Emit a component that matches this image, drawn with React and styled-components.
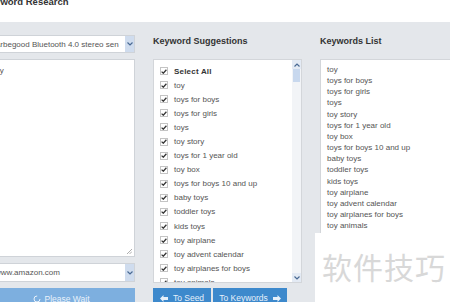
import React from "react";
import styled, { createGlobalStyle } from "styled-components";

const Global = createGlobalStyle`
  html, body { margin: 0; padding: 0; background: #e4e7eb; }
  body { font-family: "Liberation Sans", Arial, sans-serif; overflow: hidden; }
  * { box-sizing: border-box; }
`;

const Frame = styled.div`
  width: 462px;
  height: 302px;
  margin-left: -12px;
  overflow: hidden;
  position: relative;
  background: #e4e7eb;
  display: flex;
  flex-direction: column;
`;

const Header = styled.header`
  height: 22px;
  flex: none;
  background: #ffffff;
  overflow: hidden;
`;

const Title = styled.h1`
  margin: -4px 0 0 -5px;
  font-size: 9.5px;
  line-height: 12px;
  font-weight: bold;
  color: #333;
`;

const Body = styled.div`
  display: flex;
  gap: 18px;
  flex: 1;
  min-height: 0;
`;

const Column = styled.div`
  display: flex;
  flex-direction: column;
  width: ${(p) => (p.$w ? `${p.$w}px` : "auto")};
  flex: ${(p) => (p.$w ? "none" : "1")};
  padding-top: 13px;
`;

const SelectBox = styled.div`
  height: ${(p) => p.$h}px;
  margin-top: ${(p) => p.$mt || 0}px;
  background: #fff;
  border: 1px solid #cfd3d8;
  display: flex;
  align-items: center;
  font-size: 8px;
  color: #555;
  flex: none;
`;

const SelectText = styled.span`
  flex: 1;
  padding-left: 6px;
  white-space: nowrap;
  overflow: hidden;
`;

const SelectArrow = styled.span`
  width: 9px;
  align-self: stretch;
  background: #cfdcee;
  display: flex;
  align-items: center;
  justify-content: center;
`;

const TextArea = styled.div`
  position: relative;
  height: 198px;
  margin-top: 6px;
  background: #fff;
  border: 1px solid #cfd3d8;
  padding: 5px 4px;
  font-size: 8px;
  line-height: 11px;
  color: #555;
  flex: none;
`;

const Grip = styled.svg`
  position: absolute;
  right: 2px;
  bottom: 2px;
`;

const WideButton = styled.div`
  margin-top: 6px;
  height: 22px;
  background: #7dafdf;
  color: #e9f2fb;
  font-size: 8.5px;
  display: flex;
  align-items: center;
  justify-content: center;
  gap: 3px;
  flex: none;
`;

const Heading = styled.h2`
  margin: 0;
  height: 12px;
  font-size: 9px;
  line-height: 12px;
  font-weight: bold;
  color: #333;
  flex: none;
`;

const ListBox = styled.div`
  margin-top: 12px;
  height: 224px;
  background: #fff;
  border: 1px solid #d3d6da;
  display: flex;
  overflow: hidden;
  flex: none;
`;

const CheckList = styled.ul`
  list-style: none;
  margin: 0;
  padding: 4px 0 0 6px;
  flex: 1;
  overflow: hidden;
`;

const CheckRow = styled.li`
  height: 14.1px;
  display: flex;
  align-items: center;
  gap: 6px;
  font-size: 8px;
  color: #555;
  font-weight: ${(p) => (p.$bold ? "bold" : "normal")};
  white-space: nowrap;
  ${(p) => p.$bold && "color: #333; letter-spacing: 0.2px;"}
`;

const Box = styled.span`
  width: 8px;
  height: 8px;
  border: 1px solid #c4c4c4;
  background: #fff;
  display: flex;
  align-items: center;
  justify-content: center;
  flex: none;
`;

const ScrollBar = styled.div`
  width: 9px;
  background: #f2f4f7;
  display: flex;
  flex-direction: column;
  flex: none;
`;

const ScrollArrow = styled.div`
  height: 9px;
  background: #e3eaf4;
  display: flex;
  align-items: center;
  justify-content: center;
  flex: none;
`;

const Thumb = styled.div`
  height: 13px;
  background: #c8d8ee;
  margin: 0 1px;
  flex: none;
`;

const Track = styled.div`
  flex: 1;
`;

const ButtonRow = styled.div`
  display: flex;
  gap: 2px;
  margin-top: 5px;
  flex: none;
`;

const BlueButton = styled.div`
  width: ${(p) => p.$w}px;
  height: 20px;
  background: #3d89cc;
  color: #e6f0fa;
  font-size: 8.5px;
  display: flex;
  align-items: center;
  justify-content: center;
  gap: 5px;
  white-space: nowrap;
`;

const KeywordBox = styled.div`
  margin-top: 12px;
  flex: 1;
  background: #fff;
  border: 1px solid #d3d6da;
  border-right: none;
  padding: 4px 6px;
  font-size: 8px;
  line-height: 11.15px;
  color: #555;
`;

const KeywordLine = styled.div`
  white-space: nowrap;
`;

const Watermark = styled.div`
  position: absolute;
  left: 327px;
  top: 233px;
  right: 0;
  bottom: 0;
  background: #fff;
  display: flex;
  align-items: center;
  padding-left: 7px;
  padding-bottom: 3px;
  font-family: "Noto Sans CJK SC", sans-serif;
  font-size: 30px;
  color: #d8d8d8;
  letter-spacing: 1px;
`;

const Chevron = ({ up }) => (
  <svg width="6" height="4" viewBox="0 0 6 4">
    <path
      d={up ? "M0.5 3.5 L3 1 L5.5 3.5" : "M0.5 0.5 L3 3 L5.5 0.5"}
      fill="none"
      stroke="#4a6a94"
      strokeWidth="1.2"
    />
  </svg>
);

const Check = () => (
  <svg width="6" height="5" viewBox="0 0 6 5">
    <path d="M0.6 2.6 L2.3 4.2 L5.4 0.8" fill="none" stroke="#333" strokeWidth="1.3" />
  </svg>
);

const ArrowIcon = ({ left }) => (
  <svg width="8" height="7" viewBox="0 0 8 7">
    <path
      d={left ? "M0 3.5 L3.5 0 L3.5 2 L8 2 L8 5 L3.5 5 L3.5 7 Z" : "M8 3.5 L4.5 0 L4.5 2 L0 2 L0 5 L4.5 5 L4.5 7 Z"}
      fill="#e6f0fa"
    />
  </svg>
);

const keywords = [
  "toy",
  "toys for boys",
  "toys for girls",
  "toys",
  "toy story",
  "toys for 1 year old",
  "toy box",
  "toys for boys 10 and up",
  "baby toys",
  "toddler toys",
  "kids toys",
  "toy airplane",
  "toy advent calendar",
  "toy airplanes for boys",
  "toy animals",
];

export default function App() {
  return (
    <>
      <Global />
      <Frame>
        <Header>
          <Title>Keyword Research</Title>
        </Header>
        <Body>
          <Column $w={147}>
            <SelectBox $h={18}>
              <SelectText>Arbegood Bluetooth 4.0 stereo sen</SelectText>
              <SelectArrow>
                <Chevron />
              </SelectArrow>
            </SelectBox>
            <TextArea>
              toy
              <Grip width="6" height="6" viewBox="0 0 6 6">
                <path d="M1 6 L6 1 M3.5 6 L6 3.5" stroke="#999" strokeWidth="0.8" />
              </Grip>
            </TextArea>
            <SelectBox $h={19} $mt={6}>
              <SelectText>www.amazon.com</SelectText>
              <SelectArrow>
                <Chevron />
              </SelectArrow>
            </SelectBox>
            <WideButton>
              <svg width="8" height="8" viewBox="0 0 8 8">
                <circle cx="4" cy="4" r="3" fill="none" stroke="#e9f2fb" strokeWidth="1" strokeDasharray="14 5" />
              </svg>
              Please Wait
            </WideButton>
          </Column>
          <Column $w={149}>
            <Heading>Keyword Suggestions</Heading>
            <ListBox>
              <CheckList>
                <CheckRow $bold>
                  <Box>
                    <Check />
                  </Box>
                  Select All
                </CheckRow>
                {keywords.map((k) => (
                  <CheckRow key={k}>
                    <Box>
                      <Check />
                    </Box>
                    {k}
                  </CheckRow>
                ))}
              </CheckList>
              <ScrollBar>
                <ScrollArrow>
                  <Chevron up />
                </ScrollArrow>
                <Thumb />
                <Track />
                <ScrollArrow>
                  <Chevron />
                </ScrollArrow>
              </ScrollBar>
            </ListBox>
            <ButtonRow>
              <BlueButton $w={58}>
                <ArrowIcon left />
                To Seed
              </BlueButton>
              <BlueButton $w={74}>
                To Keywords
                <ArrowIcon />
              </BlueButton>
            </ButtonRow>
          </Column>
          <Column>
            <Heading>Keywords List</Heading>
            <KeywordBox>
              {keywords.map((k) => (
                <KeywordLine key={k}>{k}</KeywordLine>
              ))}
            </KeywordBox>
          </Column>
        </Body>
        <Watermark>软件技巧</Watermark>
      </Frame>
    </>
  );
}
